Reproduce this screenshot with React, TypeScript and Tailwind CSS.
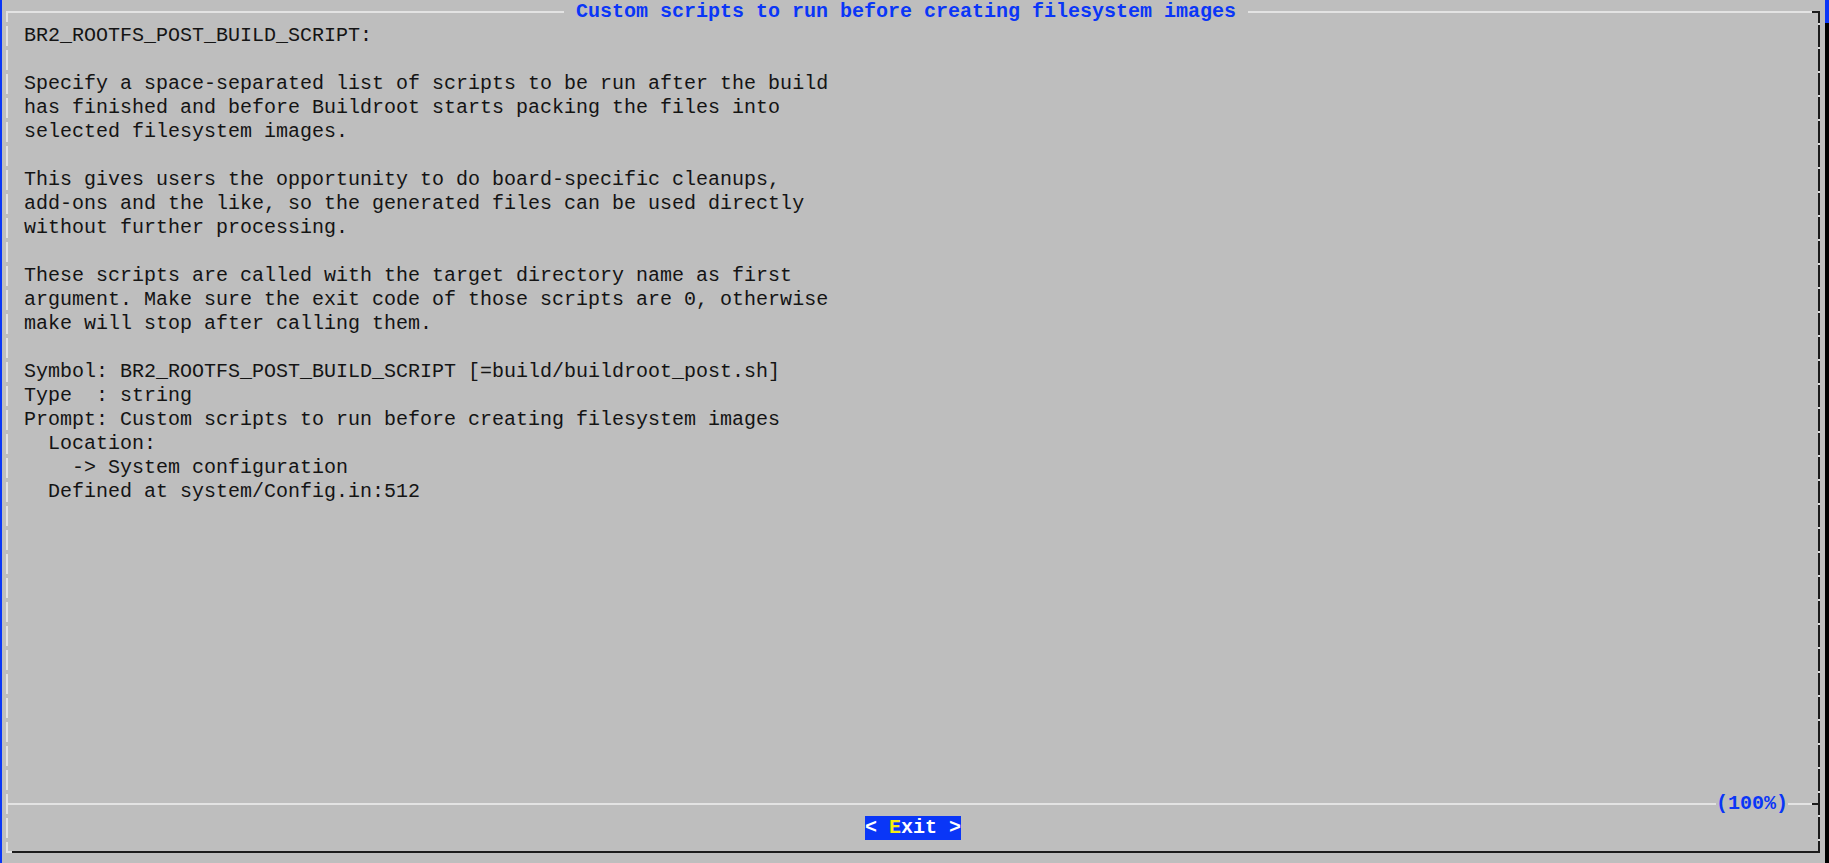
const helpLines = [
  "BR2_ROOTFS_POST_BUILD_SCRIPT:",
  "",
  "Specify a space-separated list of scripts to be run after the build",
  "has finished and before Buildroot starts packing the files into",
  "selected filesystem images.",
  "",
  "This gives users the opportunity to do board-specific cleanups,",
  "add-ons and the like, so the generated files can be used directly",
  "without further processing.",
  "",
  "These scripts are called with the target directory name as first",
  "argument. Make sure the exit code of those scripts are 0, otherwise",
  "make will stop after calling them.",
  "",
  "Symbol: BR2_ROOTFS_POST_BUILD_SCRIPT [=build/buildroot_post.sh]",
  "Type  : string",
  "Prompt: Custom scripts to run before creating filesystem images",
  "  Location:",
  "    -> System configuration",
  "  Defined at system/Config.in:512",
];

export default function App() {
  return (
    <div className="flex h-[863px] w-[1829px] overflow-hidden bg-[#bebebe] font-['Liberation_Mono','Courier_New',monospace] text-[20px] leading-[24px] text-[#141414]">
      {/* cursor strip on the left edge */}
      <div className="w-[2px] shrink-0 bg-[#0a36f7]" />

      {/* dialog box */}
      <div className="ml-[4px] mt-[11px] flex h-[842px] w-[1814px] shrink-0 flex-col">
        {/* top border with title */}
        <div className="flex h-[2px] items-center">
          <div className="h-[2px] w-[558px] bg-[#e3e3e3]" />
          <span className="whitespace-pre font-bold text-[#0a36f7]">
            {" Custom scripts to run before creating filesystem images "}
          </span>
          <div className="h-[2px] flex-1 bg-[#e3e3e3]" />
          <div className="h-[2px] w-[8px] bg-[#1c1c1c]" />
        </div>

        <div className="flex flex-1">
          <div className="w-[2px] bg-[repeating-linear-gradient(to_bottom,#e3e3e3_0px,#e3e3e3_9px,transparent_9px,transparent_13px,#e3e3e3_13px,#e3e3e3_24px)]" />

          <div className="flex flex-1 flex-col pt-[11px]">
            <div className="pl-[16px]">
              {helpLines.map((line, i) => (
                <div key={i} className="h-[24px] whitespace-pre">
                  {line}
                </div>
              ))}
            </div>

            <div className="flex-1" />

            {/* separator with scroll percentage */}
            <div className="flex h-[2px] items-center">
              <div className="h-[2px] flex-1 bg-[#e3e3e3]" />
              <span className="font-bold text-[#0a36f7]">(100%)</span>
              <div className="h-[2px] w-[24px] bg-[#e3e3e3]" />
              <div className="h-[2px] w-[6px] bg-[#1c1c1c]" />
            </div>

            <div className="flex h-[46px] items-center justify-center">
              <span className="whitespace-pre bg-[#0a36f7] font-bold text-white">
                {"< "}
                <span className="text-[#f5ee10]">E</span>
                {"xit >"}
              </span>
            </div>
          </div>

          <div className="w-[2px] bg-[repeating-linear-gradient(to_bottom,#1c1c1c_0px,#1c1c1c_10px,#dcdcdc_10px,#dcdcdc_12px,#1c1c1c_12px,#1c1c1c_24px)]" />
        </div>

        {/* bottom border */}
        <div className="flex h-[2px]">
          <div className="w-[6px] bg-[#e3e3e3]" />
          <div className="flex-1 bg-[#1c1c1c]" />
        </div>
      </div>

      {/* scrollbar */}
      <div className="ml-[5px] flex w-[4px] shrink-0 flex-col">
        <div className="h-[23px] bg-[#0a36f7]" />
        <div className="flex-1 bg-black" />
      </div>
    </div>
  );
}
